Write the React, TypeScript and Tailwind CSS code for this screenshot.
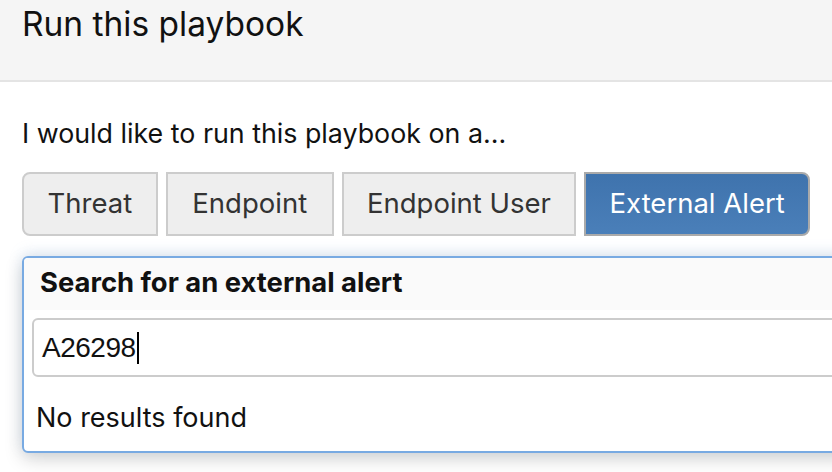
export default function App() {
  const options = [
    { label: "Threat", w: "w-[136px]", cls: "rounded-l-lg" },
    { label: "Endpoint", w: "w-[168px]", cls: "" },
    { label: "Endpoint User", w: "w-[235px]", cls: "" },
    { label: "External Alert", w: "w-[226px]", cls: "rounded-r-lg", active: true },
  ];

  return (
    <div className="w-[832px] h-[472px] overflow-hidden bg-white text-[#111] font-['Inter',sans-serif]">
      {/* HEADER */}
      <div className="h-[82px] bg-[#f5f5f5] border-b-2 border-[#e4e4e4] px-[22px] pt-[2px]">
        <h1 className="text-[33.5px] leading-[44px] font-normal">Run this playbook</h1>
      </div>

      <div className="px-[22px]">
        <p className="mt-[35px] text-[26.8px] leading-[32px]">I would like to run this playbook on a...</p>

        {/* OPTIONS */}
        <div className="mt-[23px] flex gap-[8px]">
          {options.map((o) => (
            <button
              key={o.label}
              className={`${o.w} ${o.cls} h-[64px] border-2 text-[27.5px] ${
                o.active
                  ? "bg-gradient-to-b from-[#3f73ad] to-[#4a7fb9] border-[#aaaaaa] text-white"
                  : "bg-[#eeeeee] border-[#cccccc] text-[#333]"
              }`}
            >
              {o.label}
            </button>
          ))}
        </div>

        {/* SEARCH PANEL */}
        <div className="mt-[20px] w-[900px] border-2 border-[#78aae2] rounded-md bg-white shadow-[0_6px_18px_rgba(0,0,0,0.18),0_-4px_14px_rgba(120,170,226,0.18)] overflow-hidden">
          <div className="h-[52px] bg-[#fafafa] px-[16px] pt-[7px]">
            <div className="text-[27.4px] leading-[34px] font-bold">Search for an external alert</div>
          </div>
          <div className="px-[8px] pt-[8px]">
            <div className="h-[59px] border-2 border-[#cccccc] rounded-md flex items-center px-[8px]">
              <span className="text-[28px] font-['Liberation_Sans',sans-serif] tracking-[-0.5px]">A26298</span>
              <span className="w-[2px] h-[32px] bg-black ml-[1px]"></span>
            </div>
          </div>
          <div className="px-[12px] pt-[24px] pb-[16px] text-[27px] leading-[34px]">No results found</div>
        </div>
      </div>
    </div>
  );
}
